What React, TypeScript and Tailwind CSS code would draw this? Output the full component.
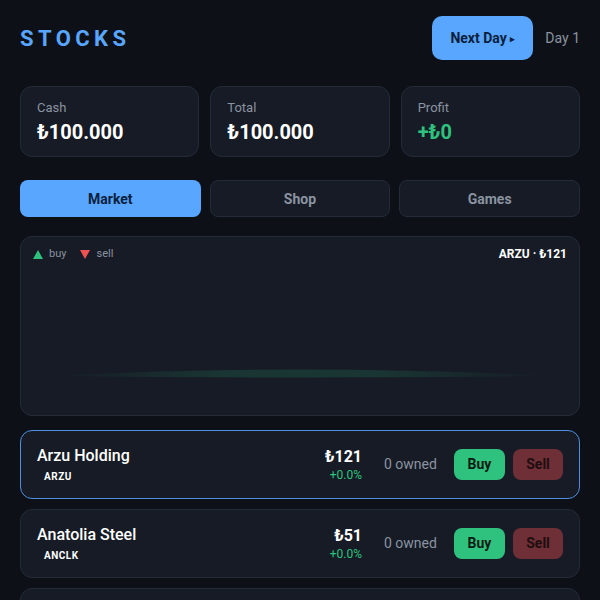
import { useState } from "react";

type Stock = { name: string; symbol: string; price: number; change: number; owned: number };

const stocks: Stock[] = [
    { name: "Arzu Holding", symbol: "ARZU", price: 121, change: 0, owned: 0 },
    { name: "Anatolia Steel", symbol: "ANCLK", price: 51, change: 0, owned: 0 },
    { name: "Bosphorus Air", symbol: "BSPR", price: 88, change: 0, owned: 0 },
];

const tabs = ["Market", "Shop", "Games"];

function StatCard({ label, value, green }: { label: string; value: string; green?: boolean }) {
    return (
        <div className="rounded-xl border border-[#242b38] bg-[#161b25] px-[16px] pt-[13px] h-[71px]">
            <div className="text-[13px] leading-4 text-[#8b93a1]">{label}</div>
            <div className={`mt-[4px] text-[20px] leading-6 font-bold ${green ? "text-[#2ec27e]" : "text-white"}`}>
                {value}
            </div>
        </div>
    );
}

function Chart() {
    return (
        <div className="relative h-[180px] rounded-xl border border-[#242b38] bg-[#161b25]">
            <div className="flex items-center justify-between px-[12px] pt-[8px]">
                <div className="flex items-center gap-[14px] text-[11px] text-[#8b93a1]">
                    <span className="flex items-center gap-[6px]">
                        <svg width="10" height="9" viewBox="0 0 10 9">
                            <path d="M5 0 L10 9 L0 9 Z" fill="#2ec27e" />
                        </svg>
                        buy
                    </span>
                    <span className="flex items-center gap-[6px]">
                        <svg width="10" height="9" viewBox="0 0 10 9">
                            <path d="M0 0 L10 0 L5 9 Z" fill="#f05252" />
                        </svg>
                        sell
                    </span>
                </div>
                <div className="text-[12px] font-bold text-white">ARZU · ₺121</div>
            </div>
            <svg className="absolute left-0 bottom-0" width="558" height="60" viewBox="0 0 558 60">
                <defs>
                    <linearGradient id="fade" x1="0" x2="1" y1="0" y2="0">
                        <stop offset="0" stopColor="#2ec27e" stopOpacity="0" />
                        <stop offset="0.35" stopColor="#2ec27e" stopOpacity="0.16" />
                        <stop offset="0.65" stopColor="#2ec27e" stopOpacity="0.16" />
                        <stop offset="1" stopColor="#2ec27e" stopOpacity="0" />
                    </linearGradient>
                </defs>
                <path d="M30 21 Q279 8 530 21 Q279 24 30 21 Z" fill="url(#fade)" />
            </svg>
        </div>
    );
}

function StockRow({ s, selected }: { s: Stock; selected?: boolean }) {
    return (
        <div
            className={`flex h-[69px] items-center rounded-xl border bg-[#161b25] pl-[16px] pr-[16px] ${
                selected ? "border-[#4d8fe0]" : "border-[#242b38]"
            }`}
        >
            <div className="flex-1">
                <div className="text-[16px] leading-5 font-medium text-white">{s.name}</div>
                <div className="mt-[5px] ml-[7px] text-[10px] leading-3 font-bold tracking-wider text-white">
                    {s.symbol}
                </div>
            </div>
            <div className="text-right">
                <div className="text-[16px] leading-5 font-bold text-white">₺{s.price}</div>
                <div className="text-[12px] leading-4 text-[#2ec27e]">+{s.change.toFixed(1)}%</div>
            </div>
            <div className="ml-[22px] w-[62px] text-[14px] text-[#8b93a1]">{s.owned} owned</div>
            <button className="ml-[8px] h-[31px] w-[51px] rounded-lg bg-[#2ec27e] text-[14px] font-bold text-[#0b1a12]">
                Buy
            </button>
            <button className="ml-[8px] h-[31px] w-[50px] rounded-lg bg-[#6e2f36] text-[14px] font-bold text-[#1e0e10]">
                Sell
            </button>
        </div>
    );
}

export default function App() {
    const [tab, setTab] = useState("Market");
    const [day, setDay] = useState(1);

    return (
        <div className="min-h-screen bg-[#0d1117] px-[20px] pt-[16px] pb-[20px] font-['Roboto',sans-serif]">
            <div className="flex items-center justify-between">
                <h1 className="text-[22px] font-bold tracking-[0.2em] text-[#58a6ff]">STOCKS</h1>
                <div className="flex items-center gap-[12px]">
                    <button
                        onClick={() => setDay(day + 1)}
                        className="h-[44px] w-[101px] rounded-[10px] bg-[#58a6ff] text-[14px] font-bold text-[#0b1f3d]"
                    >
                        Next Day <span className="text-[9px] align-[1px]">▸</span>
                    </button>
                    <span className="text-[14px] text-[#8b93a1]">Day {day}</span>
                </div>
            </div>

            <div className="mt-[26px] grid grid-cols-3 gap-[11px]">
                <StatCard label="Cash" value="₺100.000" />
                <StatCard label="Total" value="₺100.000" />
                <StatCard label="Profit" value="+₺0" green />
            </div>

            <div className="mt-[23px] grid grid-cols-3 gap-[9px]">
                {tabs.map((t) => (
                    <button
                        key={t}
                        onClick={() => setTab(t)}
                        className={`h-[37px] rounded-lg pt-[1px] text-[14px] font-bold ${
                            tab === t
                                ? "bg-[#58a6ff] text-[#0b1f3d]"
                                : "border border-[#242b38] bg-[#161b25] text-[#8b93a1]"
                        }`}
                    >
                        {t}
                    </button>
                ))}
            </div>

            <div className="mt-[19px]">
                <Chart />
            </div>

            <div className="mt-[14px] flex flex-col gap-[10px]">
                {stocks.map((s, i) => (
                    <StockRow key={s.symbol} s={s} selected={i === 0} />
                ))}
            </div>
        </div>
    );
}
